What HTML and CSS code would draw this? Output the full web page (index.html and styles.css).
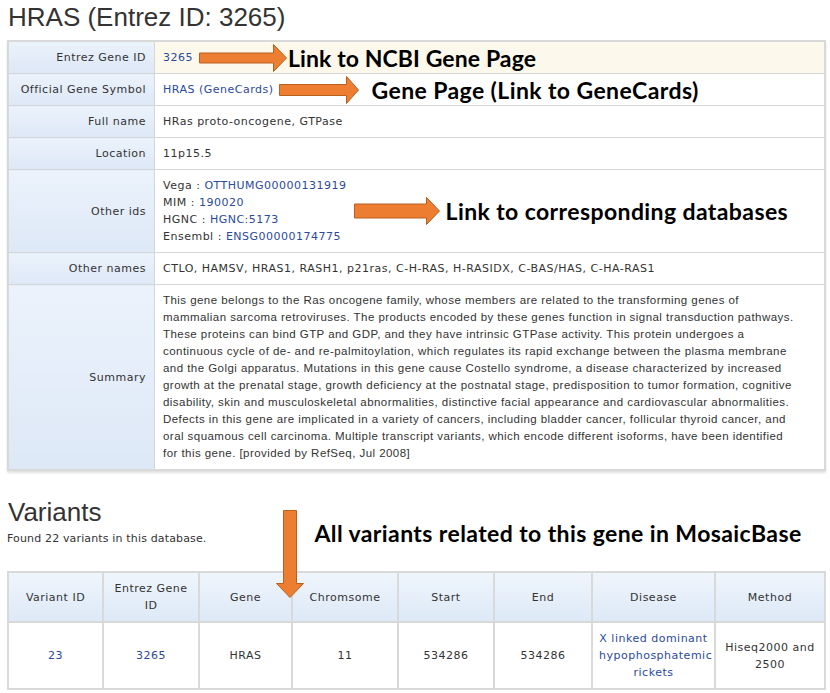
FILE: index.html
```html
<!DOCTYPE html>
<html lang="en">
<head>
<meta charset="UTF-8">
<title>HRAS (Entrez ID: 3265)</title>
<link rel="stylesheet" href="styles.css">
</head>
<body>
<div class="page">
	<h1 class="gene-title">HRAS (Entrez ID: 3265)</h1>

	<table class="info-table">
		<tr class="first-row">
			<th>Entrez Gene ID</th>
			<td>
				<div class="note-line">
					<a href="#">3265</a>
					<svg class="arrow-right arrow-1" width="88" height="28" viewBox="0 0 88 28"><polygon points="0.5,9 74.5,9 74.5,0.5 87.5,14 74.5,27.5 74.5,19 0.5,19"/></svg>
					<span class="callout callout-ncbi">Link to NCBI Gene Page</span>
				</div>
			</td>
		</tr>
		<tr>
			<th>Official Gene Symbol</th>
			<td>
				<div class="note-line">
					<a href="#">HRAS (GeneCards)</a>
					<svg class="arrow-right arrow-2" width="80" height="28" viewBox="0 0 80 28"><polygon points="0.5,8.5 67.5,8.5 67.5,0.5 79.5,14 67.5,27.5 67.5,19.5 0.5,19.5"/></svg>
					<span class="callout">Gene Page (Link to GeneCards)</span>
				</div>
			</td>
		</tr>
		<tr>
			<th>Full name</th>
			<td>HRas proto-oncogene, GTPase</td>
		</tr>
		<tr>
			<th>Location</th>
			<td>11p15.5</td>
		</tr>
		<tr>
			<th>Other ids</th>
			<td>
				<div class="note-line ids-line">
					<div class="id-list">
						<div>Vega : <a href="#">OTTHUMG00000131919</a></div>
						<div>MIM : <a href="#">190020</a></div>
						<div>HGNC : <a href="#">HGNC:5173</a></div>
						<div>Ensembl : <a href="#">ENSG00000174775</a></div>
					</div>
					<svg class="arrow-right arrow-3" width="86" height="28" viewBox="0 0 86 28"><polygon points="0.5,7 72.5,7 72.5,0.5 85.5,14 72.5,27.5 72.5,21 0.5,21"/></svg>
					<span class="callout">Link to corresponding databases</span>
				</div>
			</td>
		</tr>
		<tr>
			<th>Other names</th>
			<td>CTLO, HAMSV, HRAS1, RASH1, p21ras, C-H-RAS, H-RASIDX, C-BAS/HAS, C-HA-RAS1</td>
		</tr>
		<tr>
			<th>Summary</th>
			<td class="summary">This gene belongs to the Ras oncogene family, whose members are related to the transforming genes of<br>
				mammalian sarcoma retroviruses. The products encoded by these genes function in signal transduction pathways.<br>
				These proteins can bind GTP and GDP, and they have intrinsic GTPase activity. This protein undergoes a<br>
				continuous cycle of de- and re-palmitoylation, which regulates its rapid exchange between the plasma membrane<br>
				and the Golgi apparatus. Mutations in this gene cause Costello syndrome, a disease characterized by increased<br>
				growth at the prenatal stage, growth deficiency at the postnatal stage, predisposition to tumor formation, cognitive<br>
				disability, skin and musculoskeletal abnormalities, distinctive facial appearance and cardiovascular abnormalities.<br>
				Defects in this gene are implicated in a variety of cancers, including bladder cancer, follicular thyroid cancer, and<br>
				oral squamous cell carcinoma. Multiple transcript variants, which encode different isoforms, have been identified<br>
				for this gene. [provided by RefSeq, Jul 2008]</td>
		</tr>
	</table>

	<div class="variants-head">
		<div>
			<h2 class="section-title">Variants</h2>
			<p class="found">Found 22 variants in this database.</p>
		</div>
		<span class="callout variants-callout">All variants related to this gene in MosaicBase</span>
		<svg class="arrow-down" width="28" height="88" viewBox="0 0 28 88"><polygon points="7.5,0.5 20.5,0.5 20.5,73.5 27.5,73.5 14,87.5 0.5,73.5 7.5,73.5"/></svg>
	</div>

	<table class="variants-table">
		<tr>
			<th class="c1">Variant ID</th>
			<th class="c2">Entrez Gene ID</th>
			<th class="c3">Gene</th>
			<th class="c4">Chromsome</th>
			<th class="c5">Start</th>
			<th class="c6">End</th>
			<th class="c7">Disease</th>
			<th class="c8">Method</th>
		</tr>
		<tr>
			<td><a href="#">23</a></td>
			<td><a href="#">3265</a></td>
			<td>HRAS</td>
			<td>11</td>
			<td>534286</td>
			<td>534286</td>
			<td><a href="#">X linked dominant hypophosphatemic rickets</a></td>
			<td>Hiseq2000 and 2500</td>
		</tr>
	</table>
</div>
</body>
</html>
```

FILE: styles.css
```css
body {
	margin: 0;
	font-family: "DejaVu Sans", Verdana, sans-serif;
	font-size: 11px;
	letter-spacing: 0.5px;
	color: #333;
	background: #fff;
}
a {
	color: #2b4a9c;
	text-decoration: none;
}
.page {
	padding: 0 4px 0 7px;
}
.gene-title {
	margin: 0 0 8px 1px;
	padding-top: 2px;
	font-family: "Liberation Sans", Arial, sans-serif;
	font-size: 26px;
	font-weight: normal;
	letter-spacing: 0;
	line-height: 30px;
	color: #333;
}

/* gene info table */
.info-table {
	width: 819px;
	border-collapse: collapse;
	border: 2px solid #d9d9d9;
	box-shadow: 0 2px 2px rgba(0, 0, 0, 0.12);
}
.info-table th,
.info-table td {
	border: 1px solid #d6d6d6;
	line-height: 17px;
	vertical-align: middle;
}
.info-table th {
	width: 127px;
	padding: 7px 8px 7px 10px;
	text-align: right;
	font-weight: normal;
	background: linear-gradient(to bottom, #ebf2fb, #dde8f7);
}
.info-table td {
	padding: 7px 8px;
	text-align: left;
}
.first-row td {
	background: #fcf9ec;
}
.summary {
	padding-top: 6px;
	padding-bottom: 6px;
	font-family: "Liberation Sans", Arial, sans-serif;
	font-size: 11.5px;
	letter-spacing: 0.45px;
	white-space: nowrap;
}
.note-line {
	display: flex;
	align-items: center;
	height: 17px;
}
.ids-line {
	height: auto;
}
.callout {
	font-family: Lato, "Open Sans", sans-serif;
	font-weight: bold;
	font-size: 23px;
	letter-spacing: 0.4px;
	line-height: 22px;
	color: #000;
	white-space: nowrap;
}
.callout-ncbi {
	letter-spacing: 0.1px;
}
.arrow-right polygon,
.arrow-down polygon {
	fill: #ed7d31;
	stroke: #b8611f;
	stroke-width: 1;
}
.arrow-right {
	flex: none;
}
.arrow-1 {
	margin: 0 1px 0 6px;
}
.arrow-2 {
	margin: 0 13px 0 5px;
}
.arrow-3 {
	margin: 0 6px 0 7px;
}

/* variants */
.variants-head {
	position: relative;
	display: flex;
	align-items: flex-end;
	margin-top: 26px;
}
.section-title {
	margin: 0 0 0 1px;
	font-family: "Liberation Sans", Arial, sans-serif;
	font-size: 26px;
	font-weight: normal;
	letter-spacing: 0;
	line-height: 30px;
}
.found {
	margin: 3px 0 0 0;
	line-height: 17px;
	letter-spacing: 0.15px;
}
.variants-callout {
	margin: 0 0 3px 108px;
}
.arrow-down {
	position: absolute;
	left: 269px;
	top: 13px;
}
.variants-table {
	width: 819px;
	margin-top: 24px;
	border-collapse: collapse;
	border: 2px solid #d9d9d9;
	table-layout: fixed;
}
.variants-table th,
.variants-table td {
	border: 2px solid #d9d9d9;
	padding: 7px 6px;
	line-height: 17px;
	text-align: center;
	vertical-align: middle;
	font-weight: normal;
}
.variants-table th {
	background: linear-gradient(to bottom, #eff5fc, #dde9f7);
}
.c1 { width: 81px; }
.c2 { width: 82px; }
.c3 { width: 79px; }
.c4 { width: 92px; }
.c5 { width: 82px; }
.c6 { width: 84px; }
.c7 { width: 109px; }
```
